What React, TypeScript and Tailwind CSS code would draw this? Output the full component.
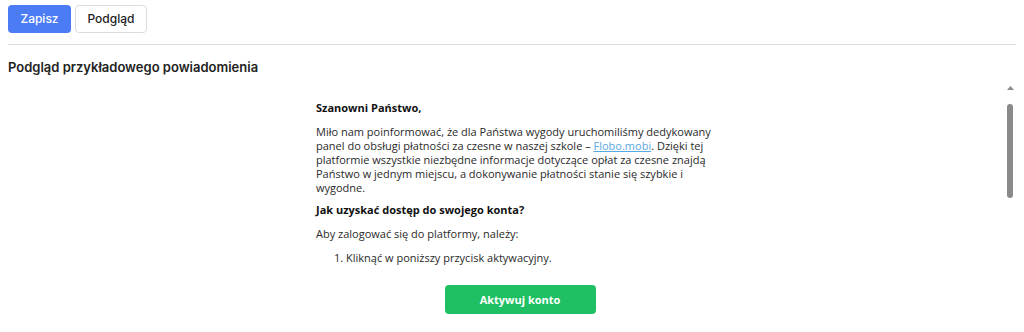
export default function App() {
  return (
    <div className="h-[332px] overflow-hidden bg-white px-2 pt-[5px] font-['Inter',sans-serif]">
      {/* Toolbar */}
      <div className="flex gap-1">
        <button
          type="button"
          className="h-7 w-[63px] rounded bg-[#4b7bf5] text-[12px] font-medium text-white"
        >
          Zapisz
        </button>
        <button
          type="button"
          className="h-7 w-[72px] rounded border border-[#dcdcdc] bg-white text-[12px] font-medium text-[#222]"
        >
          Podgląd
        </button>
      </div>

      <div className="mt-[11px] border-t border-[#dcdcdc]" />

      <h2 className="mt-[13px] text-[13px] font-semibold leading-[18px] text-[#222]">
        Podgląd przykładowego powiadomienia
      </h2>

      {/* Preview */}
      <div className="relative mt-[10px] h-[260px] overflow-hidden">
        <div className="ml-[308px] w-[398px] pt-[15px] font-['Open_Sans',sans-serif] text-[11px] leading-[14px] text-[#2a2a2a]">
          <p className="font-bold text-[#111]">Szanowni Państwo,</p>
          <p className="mt-[10px]">
            Miło nam poinformować, że dla Państwa wygody uruchomiliśmy dedykowany panel do obsługi
            płatności za czesne w naszej szkole –{" "}
            <a href="#" className="text-[#5aa9e0] underline">
              Flobo.mobi
            </a>
            . Dzięki tej platformie wszystkie niezbędne informacje dotyczące opłat za czesne znajdą
            Państwo w jednym miejscu, a dokonywanie płatności stanie się szybkie i wygodne.
          </p>
          <p className="mt-[8px] font-bold text-[#111]">Jak uzyskać dostęp do swojego konta?</p>
          <p className="mt-[10px]">Aby zalogować się do platformy, należy:</p>
          <ol className="mt-[10px] list-decimal pl-[30px]">
            <li>Kliknąć w poniższy przycisk aktywacyjny.</li>
          </ol>
          <div className="mt-[20px] flex justify-center pl-[10px]">
            <a
              href="#"
              className="flex h-[29px] w-[151px] items-center justify-center rounded bg-[#1ec063] text-[11px] font-bold text-white"
            >
              Aktywuj konto
            </a>
          </div>
        </div>

        {/* Scrollbar overlay */}
        <div className="absolute right-[1px] top-0 flex w-[10px] flex-col items-center">
          <svg width="7" height="4" viewBox="0 0 7 4">
            <path d="M0 4 L3.5 0 L7 4 Z" fill="#8a8a8a" />
          </svg>
          <div className="mt-[14px] h-[94px] w-[6px] rounded-full bg-[#8a8a8a]" />
        </div>
      </div>
    </div>
  );
}
